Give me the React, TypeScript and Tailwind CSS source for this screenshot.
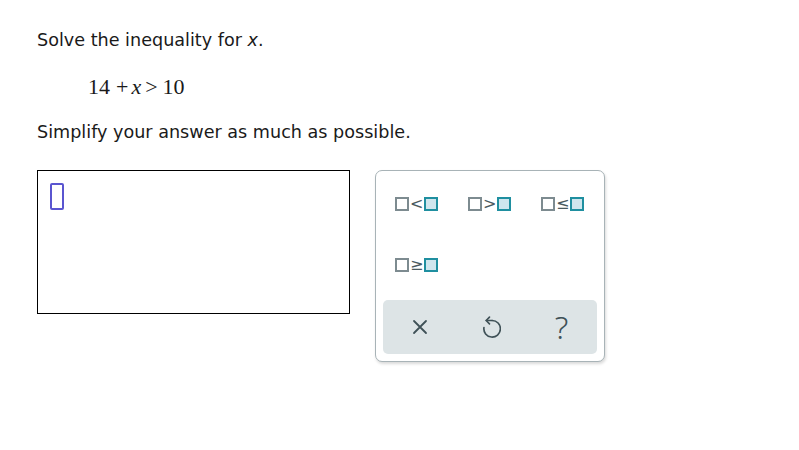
const ops = ['<', '>', '≤', '≥']

function OpKey({ op }: { op: string }) {
  return (
    <button className="flex h-[28px] items-center">
      <span className="block h-[14px] w-[14px] border-2 border-[#7d8b90]" />
      <span className="mx-[1px] text-[16px] leading-none text-[#4a5a60] [font-family:'DejaVu_Sans',sans-serif]">{op}</span>
      <span className="block h-[14px] w-[14px] border-2 border-[#1f8fa0] bg-[#cfe6ee]" />
    </button>
  )
}

function UndoIcon() {
  return (
    <svg width="19" height="26" viewBox="0 0 16 22" fill="none" stroke="#3f5157" strokeWidth="1.4" strokeLinecap="round" strokeLinejoin="round">
      <path d="M8.5 5.5 H3.5" />
      <path d="M6.3 2.7 L3.5 5.5 L6.3 8.3" />
      <path d="M8.5 5.5 A 7 7 0 1 1 1.6 11.5" />
    </svg>
  )
}

function CloseIcon() {
  return (
    <svg width="16" height="16" viewBox="0 0 16 16" fill="none" stroke="#3f5157" strokeWidth="1.8" strokeLinecap="round">
      <path d="M2 2 L14 14 M14 2 L2 14" />
    </svg>
  )
}

export default function App() {
  return (
    <div className="h-[450px] w-[799px] bg-white text-[#1a1a1a] [font-family:'DejaVu_Sans',Verdana,sans-serif]">
      <div className="px-[37px] pt-[28px]">
        <p className="text-[17.6px] leading-[24px]">
          Solve the inequality for <i>x</i>.
        </p>
        <div className="mt-[23px] flex items-baseline pl-[51px] text-[22px] leading-[24px] [font-family:'Liberation_Serif',serif]">
          <span>14</span>
          <span className="ml-[6px]">+</span>
          <i className="ml-[3px]">x</i>
          <span className="ml-[4px]">&gt;</span>
          <span className="ml-[5px]">10</span>
        </div>
        <p className="mt-[21px] text-[17.6px] leading-[24px]">Simplify your answer as much as possible.</p>

        <div className="mt-[26px] flex items-start gap-[25px]">
          <div className="h-[144px] w-[313px] border border-black p-[12px]">
            <div className="h-[27px] w-[14px] rounded-[2px] border-2 border-[#5a55d0]" />
          </div>

          <div className="w-[230px] rounded-[7px] border border-[#a8b3b7] bg-white p-[7px] shadow-[1px_2px_3px_rgba(0,0,0,0.15)]">
            <div className="grid grid-cols-[73px_73px_60px] gap-y-[33px] pl-[12px] pt-[12px] pb-[21px]">
              {ops.map(op => (
                <OpKey key={op} op={op} />
              ))}
            </div>
            <div className="flex h-[54px] items-center justify-center gap-[54px] rounded-[5px] bg-[#dde4e6] text-[#3f5157]">
              <CloseIcon />
              <UndoIcon />
              <span className="text-[32px] leading-none [font-family:'Noto_Sans',sans-serif] font-light">?</span>
            </div>
          </div>
        </div>
      </div>
    </div>
  )
}
